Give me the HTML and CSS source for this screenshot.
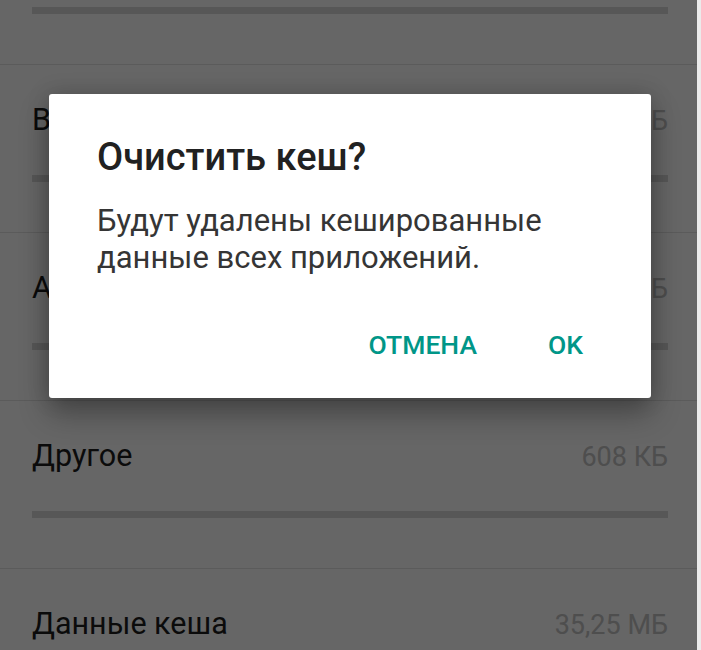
FILE: index.html
```html
<!DOCTYPE html>
<html lang="ru">
<head>
<meta charset="utf-8">
<title>Очистить кеш?</title>
<link rel="stylesheet" href="styles.css">
</head>
<body>
<div class="screen">
  <div class="list">
    <div class="row-tail">
      <div class="bar"></div>
    </div>
    <div class="row">
      <div class="row-head"><span class="label">Видео</span><span class="value">0 КБ</span></div>
      <div class="bar"></div>
    </div>
    <div class="row">
      <div class="row-head"><span class="label">Аудио</span><span class="value">0 КБ</span></div>
      <div class="bar"></div>
    </div>
    <div class="row">
      <div class="row-head"><span class="label">Другое</span><span class="value">608 КБ</span></div>
      <div class="bar"></div>
    </div>
    <div class="row">
      <div class="row-head"><span class="label">Данные кеша</span><span class="value">35,25 МБ</span></div>
      <div class="bar"></div>
    </div>
  </div>
  <div class="scrim"></div>
  <div class="dialog">
    <h1 class="dialog-title">Очистить кеш?</h1>
    <p class="dialog-text">Будут удалены кешированные данные всех приложений.</p>
    <div class="dialog-actions">
      <span class="btn">Отмена</span>
      <span class="btn">OK</span>
    </div>
  </div>
</div>
</body>
</html>
```
FILE: styles.css
```css
html, body {
  margin: 0;
  padding: 0;
  background: #ffffff;
}
body {
  font-family: Roboto, "Noto Sans", "Liberation Sans", sans-serif;
}
.screen {
  position: relative;
  width: 701px;
  height: 650px;
  overflow: hidden;
  background: #ffffff;
  border-right: 4px solid #ebebeb;
  box-sizing: border-box;
}
.row-tail {
  padding: 7px 29px 50px 32px;
  border-bottom: 1px solid #e4e4e4;
}
.row {
  height: 130px;
  border-bottom: 1px solid #e4e4e4;
  padding: 37px 29px 0 32px;
}
.row-head {
  display: flex;
  justify-content: space-between;
  align-items: baseline;
  height: 36px;
}
.label {
  font-size: 30.5px;
  line-height: 36px;
  color: #1c1c1c;
}
.value {
  font-size: 27px;
  line-height: 36px;
  color: #c2c2c2;
}
.row .bar {
  margin-top: 37px;
}
.bar {
  height: 7px;
  background: #d9d9d9;
}
.scrim {
  position: absolute;
  inset: 0;
  background: rgba(0, 0, 0, 0.6);
}
.dialog {
  position: absolute;
  left: 49px;
  top: 94px;
  width: 602px;
  height: 304px;
  box-sizing: border-box;
  background: #ffffff;
  border-radius: 3px;
  padding: 41px 68px 0 48px;
  box-shadow: 0 16px 30px rgba(0, 0, 0, 0.3), 0 0 22px rgba(0, 0, 0, 0.18);
}
.dialog-title {
  margin: 0;
  font-size: 38px;
  line-height: 44px;
  font-weight: 500;
  color: #212121;
}
.dialog-text {
  margin: 23px 0 0;
  font-size: 31px;
  line-height: 37px;
  color: #353535;
  width: 470px;
}
.dialog-actions {
  margin-top: 53px;
  display: flex;
  justify-content: flex-end;
  gap: 71px;
}
.btn {
  font-size: 26.5px;
  line-height: 32px;
  font-weight: 500;
  color: #009688;
  text-transform: uppercase;
}
```
